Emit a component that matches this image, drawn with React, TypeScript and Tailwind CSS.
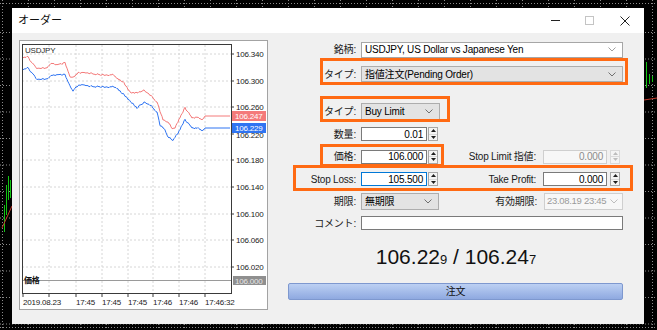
import React from 'react';

const UI = "font-['Liberation_Sans','Noto_Sans_CJK_JP',sans-serif]";

const ask = [
  [23, 58], [28, 57], [32, 63], [37, 68], [47, 68], [52, 63], [57, 65], [62, 64], [65, 63], [70, 77], [73, 78], [78, 73],
  [90, 73], [100, 75], [113, 75], [117, 78], [123, 82], [130, 92], [133, 93], [140, 92], [143, 90], [147, 92], [150, 95],
  [157, 102], [163, 120], [168, 122], [172, 128], [175, 128], [180, 117], [185, 108], [188, 112], [192, 118], [197, 117],
  [202, 120], [205, 116], [230, 116],
];
const bid = [
  [23, 70], [28, 68], [32, 73], [37, 79], [48, 79], [52, 75], [65, 75], [68, 82], [73, 92], [75, 88], [80, 85], [100, 87],
  [113, 87], [117, 88], [127, 98], [132, 103], [137, 108], [140, 105], [145, 102], [150, 105], [157, 112], [160, 125],
  [165, 130], [168, 137], [173, 140], [178, 133], [182, 125], [185, 120], [188, 123], [192, 128], [198, 128], [202, 131],
  [205, 128], [230, 128],
];

// tick-ish jitter so the lines look like raw quotes
function linePath(pts: number[][]) {
  let d = '';
  for (let i = 0; i < pts.length - 1; i++) {
    const [x0, y0] = pts[i];
    const [x1, y1] = pts[i + 1];
    const n = Math.max(1, Math.round(x1 - x0));
    for (let k = 0; k < n; k++) {
      const x = x0 + ((x1 - x0) * k) / n;
      const h = Math.sin(x * 12.9898) * 43758.5453;
      const r = x > 204 ? 0 : (h - Math.floor(h) - 0.5) * 1.6;
      const y = y0 + ((y1 - y0) * k) / n + r;
      d += (d ? 'L' : 'M') + x.toFixed(1) + ' ' + y.toFixed(1) + ' ';
    }
  }
  const last = pts[pts.length - 1];
  return d + 'L' + last[0] + ' ' + last[1];
}

const levels = [
  [54, '106.340'], [81, '106.300'], [107, '106.260'], [134, '106.220'], [160, '106.180'],
  [187, '106.140'], [214, '106.100'], [240, '106.060'], [267, '106.020'],
] as const;
const vgrid = [49, 76, 102, 128, 153, 179, 205];
const times = [
  [23, '2019.08.23'], [76, '17:45'], [102, '17:45'], [128, '17:45'], [153, '17:46'], [179, '17:46'], [205, '17:46:32'],
] as const;

function Chart() {
  return (
    <svg width="247" height="268" viewBox="20 41 247 268" fontFamily="Liberation Sans, sans-serif" fontSize="8">
      {levels.map(([y]) => (
        <line key={y} x1="22" x2="231" y1={y} y2={y} stroke="#d6d6d6" strokeDasharray="2 2" />
      ))}
      {vgrid.map((x) => (
        <line key={x} x1={x} x2={x} y1="45" y2="293" stroke="#d6d6d6" strokeDasharray="2 2" />
      ))}
      <line x1="22" x2="231" y1="280.5" y2="280.5" stroke="#9a9a9a" />
      <path d={linePath(ask)} fill="none" stroke="#f47a7a" strokeWidth="1" />
      <path d={linePath(bid)} fill="none" stroke="#2f74f2" strokeWidth="1" />
      <rect x="22.5" y="44.5" width="209" height="249" fill="none" stroke="#3a3a3a" />
      <text x="25" y="53" fill="#2a2a2a">USDJPY</text>
      <text x="24" y="283" fill="#111" fontFamily="Noto Sans CJK JP" fontWeight="bold" fontSize="8">価格</text>
      {levels.map(([y, t]) => (
        <g key={t}>
          <line x1="231" x2="234" y1={y} y2={y} stroke="#3a3a3a" />
          <text x="236" y={y === 134 ? y + 4 : y + 3} fill="#222">{t}</text>
        </g>
      ))}
      <rect x="232" y="111" width="34" height="10" fill="#f47a7a" />
      <text x="235" y="119" fill="#fff">106.247</text>
      <rect x="232" y="123" width="34" height="10" fill="#2f74f2" />
      <text x="235" y="131" fill="#fff">106.229</text>
      <rect x="233" y="276" width="33" height="9" fill="#8f8f8f" />
      <text x="235" y="283.5" fill="#e6e6e6">106.000</text>
      {times.map(([x, t], i) => (
        <g key={i}>
          <line x1={x} x2={x} y1="293" y2="297" stroke="#3a3a3a" />
          <text x={x} y="305" fill="#222">{t}</text>
        </g>
      ))}
      <line x1="49" x2="49" y1="293" y2="297" stroke="#3a3a3a" />
    </svg>
  );
}

function Backdrop() {
  const xs = Array.from({ length: 26 }, (_, i) => 2 + i * 26);
  const ys = [3, ...Array.from({ length: 12 }, (_, i) => 32 + i * 26.5), 327];
  return (
    <svg className="absolute inset-0" width="657" height="330">
      {xs.map((x) => (
        <line key={'x' + x} x1={x + 0.5} x2={x + 0.5} y1="0" y2="330" stroke="#8a8a8a" strokeDasharray="1 2" />
      ))}
      {ys.map((y) => (
        <line key={'y' + y} x1="0" x2="657" y1={y + 0.5} y2={y + 0.5} stroke="#8a8a8a" strokeDasharray="1 2" />
      ))}
      <g stroke="#12c412">
        <line x1="4.5" x2="4.5" y1="205" y2="232" />
        <line x1="6.5" x2="6.5" y1="185" y2="215" />
        <line x1="8.5" x2="8.5" y1="176" y2="200" />
        <line x1="10.5" x2="10.5" y1="180" y2="198" />
        <line x1="646.5" x2="646.5" y1="62" y2="88" />
        <line x1="649.5" x2="649.5" y1="74" y2="84" />
        <line x1="652.5" x2="652.5" y1="76" y2="82" />
      </g>
      <line x1="2" y1="228" x2="12" y2="206" stroke="#c0392b" />
      <line x1="644" y1="100" x2="657" y2="98" stroke="#c0392b" />
    </svg>
  );
}

const Chevron = ({ c = '#707070' }: { c?: string }) => (
  <svg width="8" height="5" viewBox="0 0 8 5" className="shrink-0">
    <polyline points="0.5,0.5 4,4 7.5,0.5" fill="none" stroke={c} strokeWidth="1" />
  </svg>
);

function Spinner({ off }: { off?: boolean }) {
  const c = off ? '#bcbcbc' : '#1e1e1e';
  return (
    <div
      className={
        off
          ? 'flex h-[14px] w-[10px] flex-col border border-[#d9d9d9] bg-[#f4f4f4]'
          : 'flex h-[14px] w-[10px] flex-col border border-[#a8a8a8] bg-[#f4f4f4]'
      }
    >
      <div className="flex flex-1 items-center justify-center border-b border-[#dadada]">
        <svg width="5" height="3" viewBox="0 0 5 3">
          <polygon points="0,3 2.5,0 5,3" fill={c} />
        </svg>
      </div>
      <div className="flex flex-1 items-center justify-center">
        <svg width="5" height="3" viewBox="0 0 5 3">
          <polygon points="0,0 5,0 2.5,3" fill={c} />
        </svg>
      </div>
    </div>
  );
}

const Label = ({ children, w = 'w-[67px]' }: { children: React.ReactNode; w?: string }) => (
  <div className={`${w} shrink-0 whitespace-nowrap text-right text-[#1a1a1a]`}>{children}</div>
);

function Row({ h, children }: { h: string; children: React.ReactNode }) {
  return <div className={`flex items-center ${h}`}>{children}</div>;
}

function Orange({ cls }: { cls: string }) {
  return <div className={`pointer-events-none absolute border-[3px] border-[#ff6a13] ${cls}`} />;
}

export default function App() {
  return (
    <div className={`relative h-[330px] w-[657px] overflow-hidden bg-black pl-[12px] pt-[8px] text-[10px] tracking-[-0.2px] ${UI}`}>
      <Backdrop />
      <div className="relative flex h-[316px] w-[632px] flex-col bg-[#f0f0f0]">
        <div className="flex h-[25px] items-center bg-white pl-[6px] text-[11px] tracking-normal text-[#111]">
          <span>オーダー</span>
          <div className="ml-auto flex items-center pr-[14px]">
            <svg width="9" height="9" viewBox="0 0 9 9">
              <line x1="0" x2="9" y1="4.5" y2="4.5" stroke="#222" />
            </svg>
            <svg className="ml-[25px]" width="9" height="9" viewBox="0 0 9 9">
              <rect x="0.5" y="0.5" width="8" height="8" fill="none" stroke="#c4c4c4" />
            </svg>
            <svg className="ml-[26px]" width="10" height="10" viewBox="0 0 10 10">
              <path d="M0.5 0.5 L9.5 9.5 M9.5 0.5 L0.5 9.5" stroke="#222" strokeWidth="1" />
            </svg>
          </div>
        </div>

        <div className="flex flex-1 items-start pl-[7px]">
          <div className="mt-[7px] h-[270px] w-[249px] border border-[#a3a3a3] bg-white">
            <Chart />
          </div>

          <div className="ml-[21px] mt-[6px] flex w-[334px] flex-col">
            <Row h="h-[21px]">
              <Label>銘柄:</Label>
              <div className="ml-[5px] flex h-[16px] w-[262px] items-center justify-between border border-[#a6a6a6] bg-white pl-[3px] pr-[6px]">
                <span>USDJPY, US Dollar vs Japanese Yen</span>
                <Chevron c="#a0a0a0" />
              </div>
            </Row>
            <Row h="h-[28px]">
              <Label>タイプ:</Label>
              <div className="ml-[5px] flex h-[16px] w-[262px] items-center justify-between border border-[#adadad] bg-[#e3e3e3] pl-[3px] pr-[6px]">
                <span>指値注文(Pending Order)</span>
                <Chevron />
              </div>
            </Row>
            <div className="h-[12px]" />
            <Row h="h-[23px]">
              <Label>タイプ:</Label>
              <div className="ml-[5px] flex h-[17px] w-[79px] items-center justify-between border border-[#adadad] bg-[#e3e3e3] pl-[3px] pr-[6px]">
                <span>Buy Limit</span>
                <Chevron />
              </div>
            </Row>
            <Row h="h-[22px]">
              <Label>数量:</Label>
              <div className="ml-[5px] flex h-[14px] w-[66px] items-center justify-end border border-[#7a7a7a] bg-white pr-[3px]">0.01</div>
              <div className="ml-px">
                <Spinner />
              </div>
            </Row>
            <Row h="h-[23px]">
              <Label>価格:</Label>
              <div className="ml-[5px] flex h-[14px] w-[66px] items-center justify-end border border-[#7a7a7a] bg-white pr-[3px]">106.000</div>
              <div className="ml-px">
                <Spinner />
              </div>
              <Label w="w-[98px]">Stop Limit 指値:</Label>
              <div className="ml-[7px] flex h-[14px] w-[64px] items-center justify-end border border-[#cfcfcf] bg-[#f7f7f7] pr-[3px] text-[#8c8c8c]">0.000</div>
              <div className="ml-[3px]">
                <Spinner off />
              </div>
            </Row>
            <Row h="h-[22px]">
              <Label>Stop Loss:</Label>
              <div className="ml-[5px] flex h-[14px] w-[66px] items-center justify-end border border-[#0078d7] bg-white pr-[3px]">105.500</div>
              <div className="ml-px">
                <Spinner />
              </div>
              <Label w="w-[98px]">Take Profit:</Label>
              <div className="ml-[7px] flex h-[14px] w-[64px] items-center justify-end border border-[#7a7a7a] bg-white pr-[3px]">0.000</div>
              <div className="ml-[3px]">
                <Spinner />
              </div>
            </Row>
            <Row h="h-[22px]">
              <Label>期限:</Label>
              <div className="ml-[5px] flex h-[17px] w-[78px] items-center justify-between border border-[#adadad] bg-[#e3e3e3] pl-[3px] pr-[6px]">
                <span>無期限</span>
                <Chevron />
              </div>
              <Label w="w-[98px]">有効期限:</Label>
              <div className="ml-[7px] flex h-[17px] w-[79px] items-center justify-between overflow-hidden whitespace-nowrap border border-[#cfcfcf] bg-[#f7f7f7] pl-[2px] pr-[4px] text-[9.5px] tracking-[-0.3px] text-[#9a9a9a]">
                <span>23.08.19 23:45</span>
                <Chevron c="#bdbdbd" />
              </div>
            </Row>
            <Row h="h-[22px]">
              <Label>コメント:</Label>
              <div className="ml-[5px] h-[14px] w-[262px] border border-[#7a7a7a] bg-white" />
            </Row>
            <div className="flex h-[44px] items-center justify-center font-['Liberation_Sans',sans-serif] tracking-normal text-[#111]">
              <div className="text-[21px] leading-none">
                <span>106.22</span>
                <span className="text-[13px]">9</span>
                <span className="whitespace-pre"> / </span>
                <span>106.24</span>
                <span className="text-[13px]">7</span>
              </div>
            </div>
            <button className="-ml-px mt-[5px] flex h-[17px] w-[335px] items-center justify-center rounded-[2px] border border-[#7e98cf] bg-gradient-to-b from-[#bcd0f3] to-[#8fa9e0] text-[10px] text-[#111]">
              注文
            </button>
          </div>
        </div>

        <Orange cls="left-[308px] top-[50px] h-[27px] w-[308px]" />
        <Orange cls="left-[308px] top-[88px] h-[26px] w-[130px]" />
        <Orange cls="left-[308px] top-[136px] h-[23px] w-[124px]" />
        <Orange cls="left-[281px] top-[157px] h-[26px] w-[340px]" />
      </div>
    </div>
  );
}
